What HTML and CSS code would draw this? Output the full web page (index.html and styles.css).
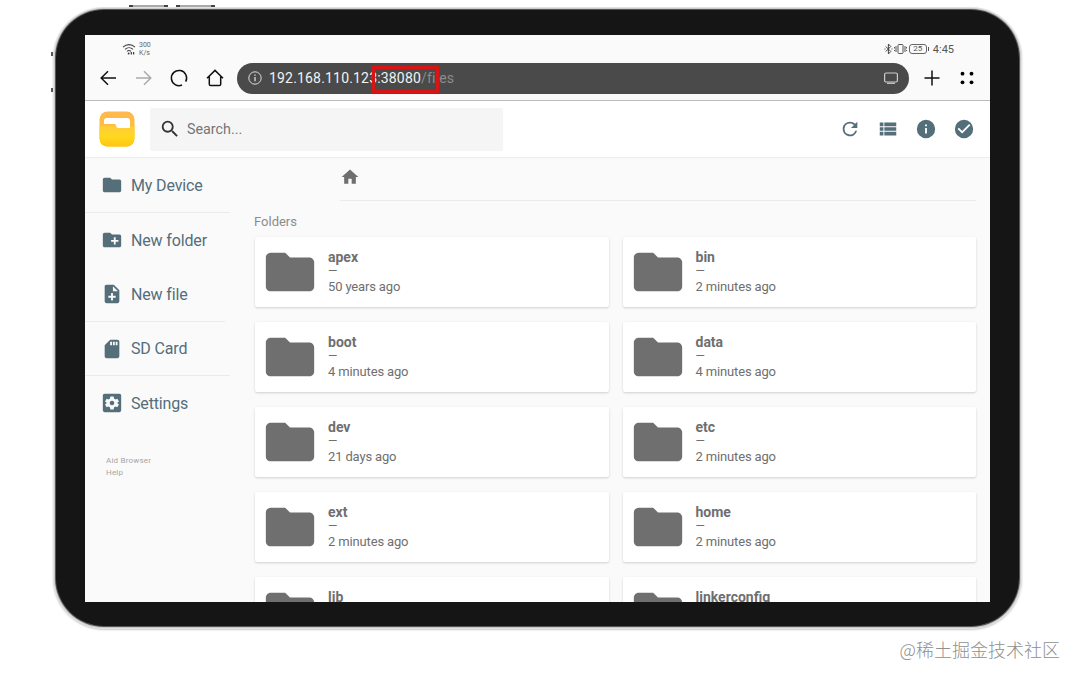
FILE: index.html
```html
<!DOCTYPE html>
<html lang="en">
<head>
  <meta charset="UTF-8" />
  <meta name="viewport" content="width=device-width, initial-scale=1.0" />
  <title>Aid Browser</title>
  <link rel="stylesheet" href="styles.css">
</head>
<body>

  <svg class="symbols">
    <symbol id="folder" viewBox="0 0 24 24"><path d="M10 4H4c-1.1 0-2 .9-2 2v12c0 1.1.9 2 2 2h16c1.1 0 2-.9 2-2V8c0-1.1-.9-2-2-2h-8l-2-2z"/></symbol>
  </svg>

  <div class="tablet">
    <div class="edge top-a"></div>
    <div class="edge top-b"></div>
    <div class="edge side-a"></div>
    <div class="edge side-b"></div>

    <div class="screen">
      <div class="status">
        <div class="status-left">
          <svg class="wifi" viewBox="0 0 14 14" fill="none" stroke="#444" stroke-width="1.1">
            <path d="M1 5.2C4.4 1.8 9.6 1.8 13 5.2M3 7.4c2.3-2.2 5.7-2.2 8 0M5 9.4c1.2-1.1 2.8-1.1 4 0"/>
            <circle cx="6.6" cy="11.5" r=".9" fill="#333" stroke="none"/>
            <path d="M9.3 10v2.5M11.6 10v2.500" stroke-width="1.3"/>
          </svg>
          <div class="speed">300<br>K/s</div>
        </div>
        <div class="status-right">
          <svg class="bt" viewBox="0 0 9 12" fill="none" stroke="#444" stroke-width="1"><path d="M1.8 3.5l5 5L4.4 11V1l2.4 2.5-5 5M.5 6h1M7.5 6h1"/></svg>
          <svg class="vibrate" viewBox="0 0 13 12" fill="none" stroke="#555" stroke-width="1"><rect x="4" y="1.500" width="5" height="9" rx=".8"/><path d="M2 3v6M11 3v6M.5 4v1.500M.5 7v1M12.500 4v1.500M12.500 7v1"/></svg>
          <div class="battery">25</div>
          <span class="clock">4:45</span>
        </div>
      </div>

      <div class="browser">
        <svg class="nav-icon" viewBox="0 0 20 20"><path d="M18 10H3M10 3.200L3.200 10l6.800 6.800"/></svg>
        <svg class="nav-icon dim" viewBox="0 0 20 20"><path d="M2 10h15M10 3.200l6.800 6.800-6.800 6.800"/></svg>
        <svg class="nav-icon" viewBox="0 0 20 20"><path d="M13 17A7.600 7.600 0 1 1 16.700 13.600"/></svg>
        <svg class="nav-icon" viewBox="0 0 20 20"><path d="M2 10.200L10 2.400l8 7.800M4.300 8.800v7.400c0 .8.5 1.300 1.300 1.300h8.800c.8 0 1.300-.5 1.300-1.300V8.800"/></svg>
        <div class="url">
          <svg class="url-info" viewBox="0 0 14 14" fill="none" stroke="#ddd"><circle cx="7" cy="7" r="6.200"/><path d="M7 6v4.300M7 3.500v1.300" stroke-width="1.300"/></svg>
          <span class="host">192.168.110.123:38080</span><span class="path">/files</span>
          <svg class="url-tab" viewBox="0 0 16 14" fill="none" stroke="#ccc" stroke-width="1.200"><rect x="1.600" y="2" width="12.800" height="9" rx="1.500"/><path d="M4 12.300h8"/></svg>
          <div class="mark"></div>
        </div>
        <svg class="nav-icon plus" viewBox="0 0 20 20"><path d="M10 2.500v15M2.500 10h15"/></svg>
        <svg class="more" viewBox="0 0 16 16"><circle cx="3.500" cy="3.700" r="1.900"/><circle cx="12.500" cy="3.700" r="1.900"/><circle cx="3.500" cy="12.300" r="1.900"/><circle cx="12.500" cy="12.300" r="1.900"/></svg>
      </div>

      <header>
        <svg class="logo" viewBox="0 0 36 36">
          <defs>
            <linearGradient id="logoTop" x1="0" y1="0" x2="0" y2="1"><stop offset="0" stop-color="#ffb84f"/><stop offset="1" stop-color="#ffc233"/></linearGradient>
            <linearGradient id="logoFront" x1="0" y1="0" x2="0" y2="1"><stop offset="0" stop-color="#ffcb3a"/><stop offset=".5" stop-color="#ffd91f"/><stop offset="1" stop-color="#ffc60f"/></linearGradient>
          </defs>
          <rect x=".5" y=".5" width="35" height="35" rx="8" fill="url(#logoTop)"/>
          <path d="M.5 15h35v12.500a8 8 0 0 1-8 8h-19a8 8 0 0 1-8-8z" fill="url(#logoFront)"/>
          <path d="M5 10c0-2 1-3 3-3h20c2 0 3 1 3 3v7H19c-2 0-1.500-4-3.500-4H5z" fill="#fff"/>
        </svg>
        <div class="search">
          <svg viewBox="0 0 24 24"><path d="M15.500 14h-.79l-.28-.27A6.470 6.470 0 0 0 16 9.500 6.500 6.500 0 1 0 9.500 16c1.610 0 3.090-.59 4.230-1.570l.27.280v.79l5 4.990L20.490 19l-4.990-5zm-6 0C7.010 14 5 11.990 5 9.500S7.010 5 9.500 5 14 7.010 14 9.500 11.990 14 9.500 14z"/></svg>
          <span>Search...</span>
        </div>
        <div class="actions">
          <svg viewBox="0 0 24 24"><path d="M17.650 6.350A7.958 7.958 0 0 0 12 4a8 8 0 1 0 7.730 10h-2.080A6 6 0 1 1 12 6c1.660 0 3.140.69 4.220 1.780L13 11h7V4l-2.350 2.350z"/></svg>
          <svg viewBox="0 0 24 24"><path d="M3 9h4V5H3v4zm0 5h4v-4H3v4zm0 5h4v-4H3v4zM8 9h13V5H8v4zm0 5h13v-4H8v4zm0 5h13v-4H8v4z"/></svg>
          <svg viewBox="0 0 24 24"><path d="M12 2a10 10 0 1 0 0 20 10 10 0 0 0 0-20zm1 15h-2v-6h2v6zm0-8h-2V7h2v2z"/></svg>
          <svg viewBox="0 0 24 24"><path d="M12 2a10 10 0 1 0 0 20 10 10 0 0 0 0-20zm-2 15l-5-5 1.410-1.410L10 14.170l7.590-7.590L19 8l-9 9z"/></svg>
        </div>
      </header>

      <div class="content">
        <aside>
          <div class="group">
            <div class="item"><svg><use href="#folder"/></svg>My Device</div>
          </div>
          <div class="group short">
            <div class="item"><svg viewBox="0 0 24 24"><path d="M20 6h-8l-2-2H4c-1.110 0-1.990.89-1.990 2L2 18c0 1.110.89 2 2 2h16c1.110 0 2-.89 2-2V8c0-1.110-.89-2-2-2zm-1 8h-3v3h-2v-3h-3v-2h3V9h2v3h3v2z"/></svg>New folder</div>
            <div class="item"><svg viewBox="0 0 24 24"><path d="M14 2H6c-1.100 0-2 .9-2 2v16c0 1.100.89 2 2 2h12c1.100 0 2-.9 2-2V8l-6-6zm2 14h-3v3h-2v-3H8v-2h3v-3h2v3h3v2zm-3-7V3.500L18.500 9H13z"/></svg>New file</div>
          </div>
          <div class="group">
            <div class="item"><svg viewBox="0 0 24 24"><path d="M18 2h-8L4 8v12c0 1.100.9 2 2 2h12c1.100 0 2-.9 2-2V4c0-1.100-.9-2-2-2zm-6 6h-2V4h2v4zm3 0h-2V4h2v4zm3 0h-2V4h2v4z"/></svg>SD Card</div>
          </div>
          <div class="group last">
            <div class="item"><svg viewBox="0 0 24 24"><path fill-rule="evenodd" d="M4 2h16c1.100 0 2 .9 2 2v16c0 1.100-.9 2-2 2H4c-1.100 0-2-.9-2-2V4c0-1.100.9-2 2-2zM10.200 5l-.4 2.200-1.500.9-2.100-.8-1.800 3.100L6.100 11.800v.4l-1.700 1.400 1.800 3.100 2.100-.8 1.500.9.400 2.200h3.600l.4-2.200 1.500-.9 2.100.8 1.800-3.100-1.700-1.400v-.4l1.700-1.400-1.800-3.100-2.100.8-1.500-.9-.4-2.200zM12 9.500a2.500 2.500 0 1 1 0 5 2.500 2.500 0 0 1 0-5z"/></svg>Settings</div>
          </div>
          <div class="credits">Aid Browser<br>Help</div>
        </aside>

        <main>
          <div class="breadcrumbs">
            <svg viewBox="0 0 24 24"><path d="M10 20v-6h4v6h5v-8h3L12 3 2 12h3v8z"/></svg>
          </div>
          <h2>Folders</h2>
          <div class="grid">
            <div class="card"><svg><use href="#folder"/></svg><div><p class="name">apex</p><p class="size">—</p><p class="time">50 years ago</p></div></div>
            <div class="card"><svg><use href="#folder"/></svg><div><p class="name">bin</p><p class="size">—</p><p class="time">2 minutes ago</p></div></div>
            <div class="card"><svg><use href="#folder"/></svg><div><p class="name">boot</p><p class="size">—</p><p class="time">4 minutes ago</p></div></div>
            <div class="card"><svg><use href="#folder"/></svg><div><p class="name">data</p><p class="size">—</p><p class="time">4 minutes ago</p></div></div>
            <div class="card"><svg><use href="#folder"/></svg><div><p class="name">dev</p><p class="size">—</p><p class="time">21 days ago</p></div></div>
            <div class="card"><svg><use href="#folder"/></svg><div><p class="name">etc</p><p class="size">—</p><p class="time">2 minutes ago</p></div></div>
            <div class="card"><svg><use href="#folder"/></svg><div><p class="name">ext</p><p class="size">—</p><p class="time">2 minutes ago</p></div></div>
            <div class="card"><svg><use href="#folder"/></svg><div><p class="name">home</p><p class="size">—</p><p class="time">2 minutes ago</p></div></div>
            <div class="card"><svg><use href="#folder"/></svg><div><p class="name">lib</p></div></div>
            <div class="card"><svg><use href="#folder"/></svg><div><p class="name">linkerconfig</p></div></div>
          </div>
        </main>
      </div>
    </div>
  </div>

  <div class="watermark">@稀土掘金技术社区</div>

</body>
</html>
```
FILE: styles.css
```css
* {
  box-sizing: border-box;
}

body {
  margin: 0;
  height: 681px;
  overflow: hidden;
  background: #fff;
  font-family: Roboto, sans-serif;
  color: #6f6f6f;
}

.symbols {
  display: none;
}

.tablet {
  position: relative;
  width: 963px;
  height: 616px;
  margin: 10px 0 0 56px;
  padding: 25px 28px 24px 29px;
  background: #151515;
  border-radius: 48px;
  box-shadow: 0 0 0 1px #555, 0 0 0 2px #c9c9c9, 0 0 0 3px #e2e2e2, 0 1px 2px 3px #ccc;
}

/* hardware buttons on the rim */
.edge {
  position: absolute;
  height: 2px;
  background: #aaa;
}

.top-a,
.top-b {
  top: -5px;
  width: 39px;
  border: solid #444;
  border-width: 0 4px;
}

.top-a {
  left: 73px;
}

.top-b {
  left: 120px;
}

.side-a,
.side-b {
  left: -5px;
  width: 2px;
  height: 4px;
  background: #555;
}

.side-a {
  top: 42px;
}

.side-b {
  top: 78px;
}

.screen {
  display: flex;
  flex-direction: column;
  width: 905px;
  height: 567px;
  background: #fafafa;
  overflow: hidden;
}

.status {
  display: flex;
  justify-content: space-between;
  height: 22px;
  padding: 6px 36px 0 37px;
}

.status-left,
.status-right {
  display: flex;
  align-items: flex-start;
}

.wifi {
  width: 14px;
  height: 14px;
  margin-top: 1px;
}

.speed {
  margin-left: 3px;
  font-size: 7px;
  line-height: 8px;
  color: #666;
}

.bt {
  width: 9px;
  height: 12px;
  margin-top: 2px;
}

.vibrate {
  width: 13px;
  height: 12px;
  margin: 2px 2px 0 1px;
}

.battery {
  position: relative;
  width: 18px;
  height: 10px;
  margin: 3px 6px 0 0;
  border: 1px solid #666;
  border-radius: 3px;
  font-size: 8px;
  line-height: 8px;
  text-align: center;
  color: #555;
}

.battery::after {
  content: "";
  position: absolute;
  right: -3px;
  top: 2px;
  width: 1px;
  height: 4px;
  background: #555;
}

.clock {
  font-size: 11px;
  line-height: 17px;
  color: #555;
}

.browser {
  display: flex;
  align-items: center;
  height: 44px;
  padding: 0 15px 1px 13px;
  border-bottom: 1px solid #bbb;
}

.nav-icon {
  width: 20px;
  height: 20px;
  margin-right: 15.5px;
  fill: none;
  stroke: #111;
  stroke-width: 1.5;
  flex-shrink: 0;
}

.nav-icon.dim {
  stroke: #aaa;
}

.url {
  position: relative;
  display: flex;
  align-items: center;
  width: 672px;
  height: 31px;
  margin-left: -3px;
  padding: 0 10px 0 11px;
  background: #4a4a4a;
  border-radius: 16px;
  font-size: 14px;
  letter-spacing: 0.18px;
  flex-shrink: 0;
}

.url-info {
  width: 14px;
  height: 14px;
  margin-right: 7px;
}

.host {
  color: #f2f2f2;
}

.path {
  color: #8c8c8c;
}

.url-tab {
  width: 16px;
  height: 14px;
  margin-left: auto;
}

/* highlight around the port */
.mark {
  position: absolute;
  left: 135px;
  top: 3px;
  width: 67px;
  height: 27px;
  border: 3px solid #d81414;
}

.plus {
  margin: 0 17px 0 13px;
}

.more {
  width: 16px;
  height: 16px;
  flex-shrink: 0;
}

header {
  display: flex;
  align-items: center;
  height: 57px;
  flex-shrink: 0;
  padding: 0 15px 0 14px;
  background: #fff;
  border-bottom: 1px solid #ececec;
}

.logo {
  width: 36px;
  height: 36px;
}

.search {
  display: flex;
  align-items: center;
  width: 353px;
  height: 43px;
  margin-left: 15px;
  padding-left: 9px;
  background: #f5f5f5;
  border-radius: 2px;
  font-size: 14.3px;
  color: #757575;
}

.search svg {
  width: 22px;
  height: 22px;
  margin-right: 6px;
  fill: #333;
}

.actions {
  display: flex;
  gap: 16px;
  margin-left: auto;
}

.actions svg {
  width: 22px;
  height: 22px;
  fill: #546e7a;
}

.content {
  display: flex;
  flex: 1;
  min-height: 0;
}

aside {
  width: 155px;
  flex-shrink: 0;
  color: #546e7a;
}

.group {
  width: 145px;
  border-bottom: 1px solid #ebebeb;
}

.group.short {
  width: 140px;
}

.group.last {
  border: none;
}

.item {
  display: flex;
  align-items: center;
  height: 54px;
  padding-left: 16px;
  font-size: 16px;
  letter-spacing: -0.15px;
}

.short + .group .item {
  height: 53px;
}

.item svg {
  width: 22px;
  height: 22px;
  margin-right: 8px;
  fill: #546e7a;
}

.credits {
  margin: 25px 0 0 21px;
  font-size: 8px;
  line-height: 12px;
  letter-spacing: 0.2px;
  color: #a5a5a5;
}

main {
  width: 750px;
  padding: 0 14px 0 15px;
}

.breadcrumbs {
  height: 43px;
  margin-left: 85px;
  padding-top: 9px;
  border-bottom: 1px solid #ebebeb;
}

.breadcrumbs svg {
  display: block;
  width: 20px;
  height: 20px;
  fill: #6f6f6f;
}

h2 {
  margin: 12px 0 7px -1px;
  font-size: 13px;
  font-weight: 400;
  line-height: 17px;
  color: #8c8c8c;
}

.grid {
  display: grid;
  grid-template-columns: 1fr 1fr;
  grid-auto-rows: 70px;
  gap: 15px 14px;
}

.card {
  display: flex;
  padding: 6px 0 0 6px;
  background: #fff;
  border-radius: 2px;
  box-shadow: 0 1px 3px rgba(0, 0, 0, 0.1), 0 1px 2px rgba(0, 0, 0, 0.08);
}

.card svg {
  width: 58px;
  height: 58px;
  margin-right: 9px;
  fill: #6f6f6f;
}

.card p {
  margin: 0;
  font-size: 13px;
}

.card .name {
  margin-top: 5px;
  font-size: 14px;
  font-weight: 700;
  line-height: 18px;
}

.card .size {
  font-size: 12px;
  line-height: 11px;
}

.card .time {
  line-height: 20px;
  letter-spacing: -0.15px;
}

.watermark {
  margin: 10px 20px 0 0;
  text-align: right;
  font-family: "Noto Sans CJK SC", sans-serif;
  font-size: 18px;
  font-weight: 300;
  line-height: 26px;
  color: #8f8f8f;
}
```
